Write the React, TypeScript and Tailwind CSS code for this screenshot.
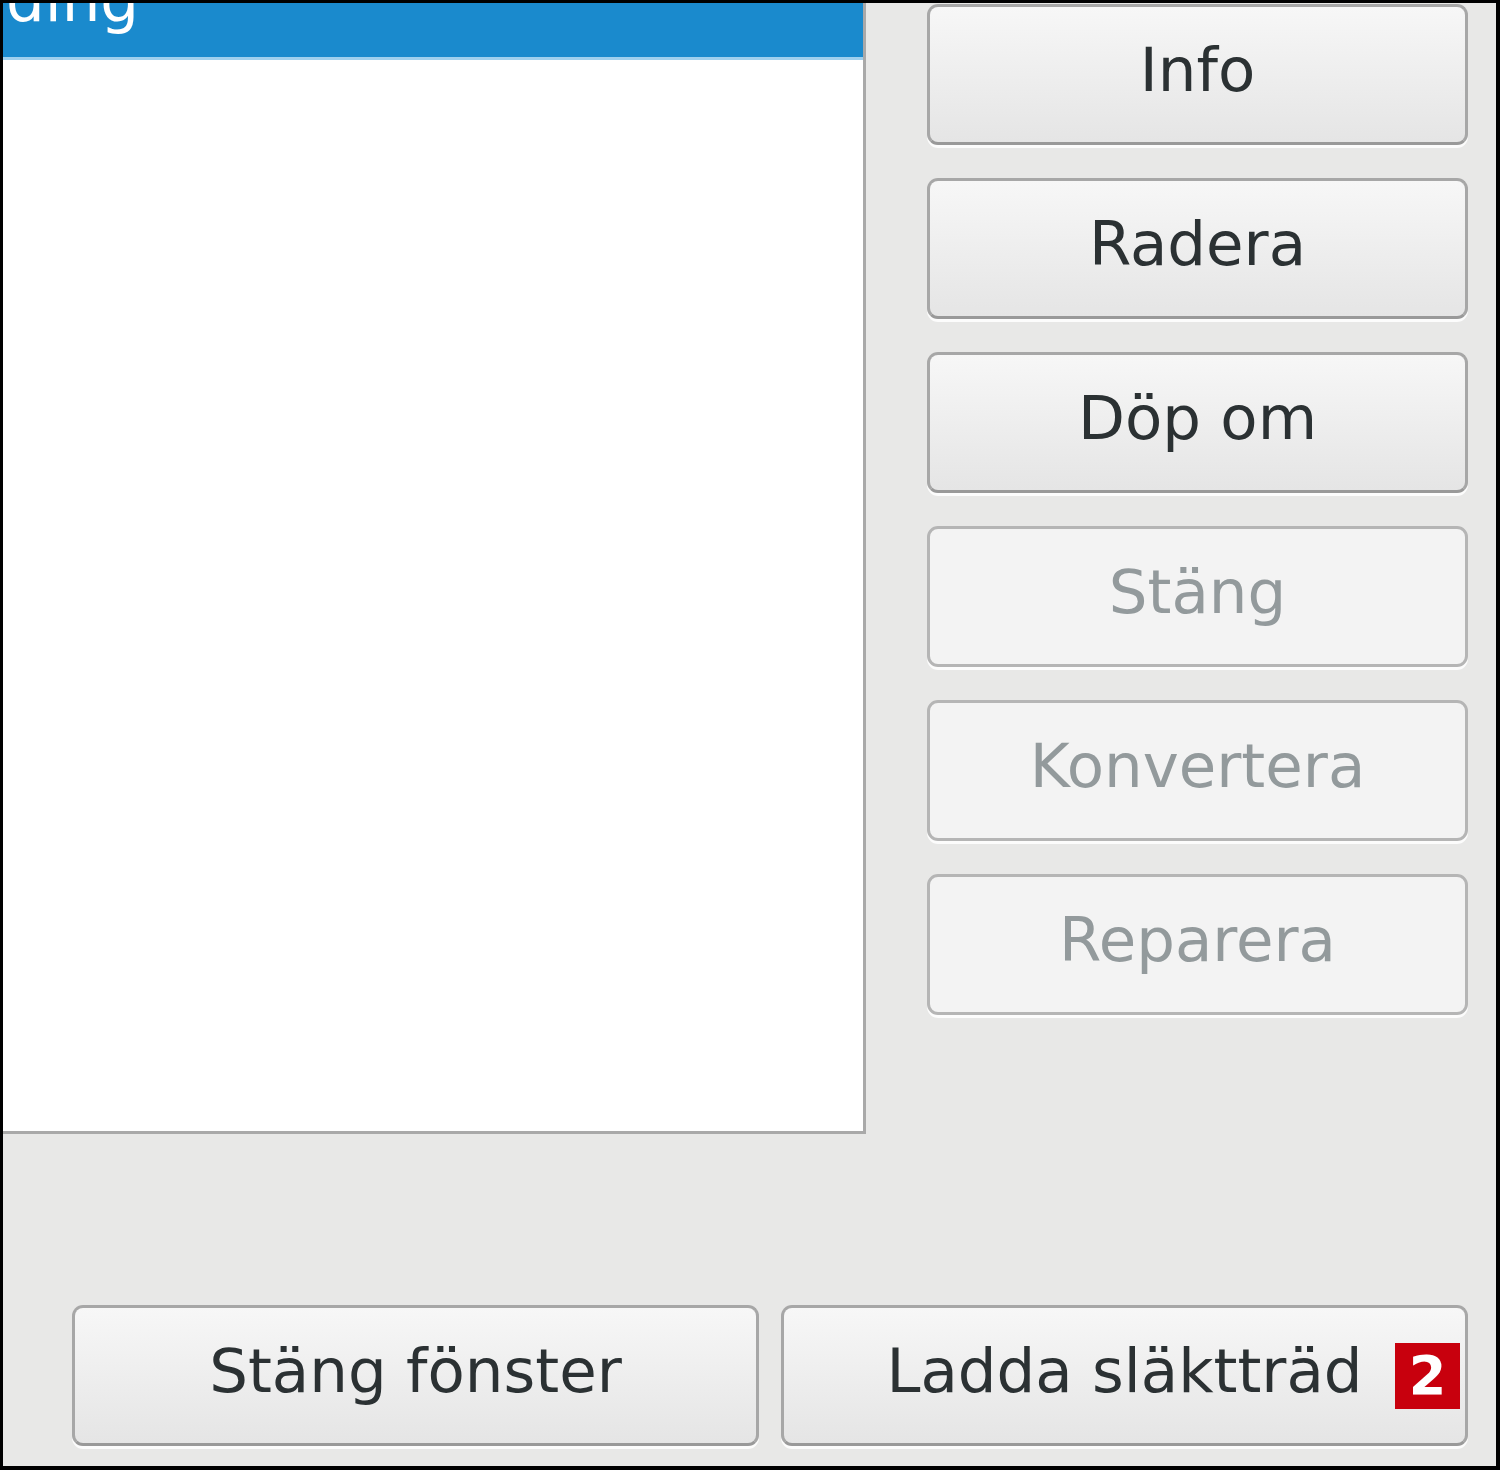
import React from 'react';

const font = { fontFamily: '"DejaVu Sans", "Liberation Sans", sans-serif' };

const sideButtons = [
  { label: 'Info', enabled: true },
  { label: 'Radera', enabled: true },
  { label: 'Döp om', enabled: true },
  { label: 'Stäng', enabled: false },
  { label: 'Konvertera', enabled: false },
  { label: 'Reparera', enabled: false },
];

const GtkButton = ({ label, enabled = true, className = '', children }: { label: string; enabled?: boolean; className?: string; children?: React.ReactNode }) => (
  <div
    className={
      'relative flex items-center justify-center h-[141px] rounded-[11px] border-[3px] pb-[10px] text-[61px] leading-[61px] shadow-[0_3px_0_rgba(255,255,255,0.85)] ' +
      (enabled
        ? 'border-[#a7a7a7] border-b-[#999999] bg-gradient-to-b from-[#f7f7f7] to-[#e5e5e5] text-[#2b3133]'
        : 'border-[#b5b5b5] bg-[#f3f3f3] text-[#939a9c]') +
      ' ' + className
    }
  >
    {label}
    {children}
  </div>
);

export default function App() {
  return (
    <div style={font} className="w-[1500px] h-[1470px] border-t-[3px] border-l-[3px] border-r-[4px] border-b-[4px] border-black bg-[#e8e8e7] flex flex-col overflow-hidden">
      <div className="flex">
        {/* file list, selected row scrolled mostly out of view */}
        <div className="w-[863px] h-[1131px] bg-white border-r-[3px] border-b-[3px] border-[#a9a9a9]">
          <div className="h-[57px] bg-[#1a8acd] border-b-[3px] border-[#9fd0ee] overflow-hidden pl-[3px]">
            <div className="text-white text-[61px] leading-[61px] -mt-[34px]">ding</div>
          </div>
        </div>

        {/* action buttons */}
        <div className="ml-[61px] w-[541px] mt-[1px] flex flex-col gap-[33px]">
          {sideButtons.map((b) => (
            <GtkButton key={b.label} label={b.label} enabled={b.enabled} />
          ))}
        </div>
      </div>

      <div className="mt-[171px] ml-[69px] w-[1396px] flex gap-[22px]">
        <GtkButton label="Stäng fönster" className="flex-1" />
        <GtkButton label="Ladda släktträd" className="flex-1">
          <span className="absolute right-[5px] top-[35px] w-[65px] h-[66px] bg-[#c8000d] text-white font-bold text-[54px] leading-[66px] text-center">
            2
          </span>
        </GtkButton>
      </div>
    </div>
  );
}
